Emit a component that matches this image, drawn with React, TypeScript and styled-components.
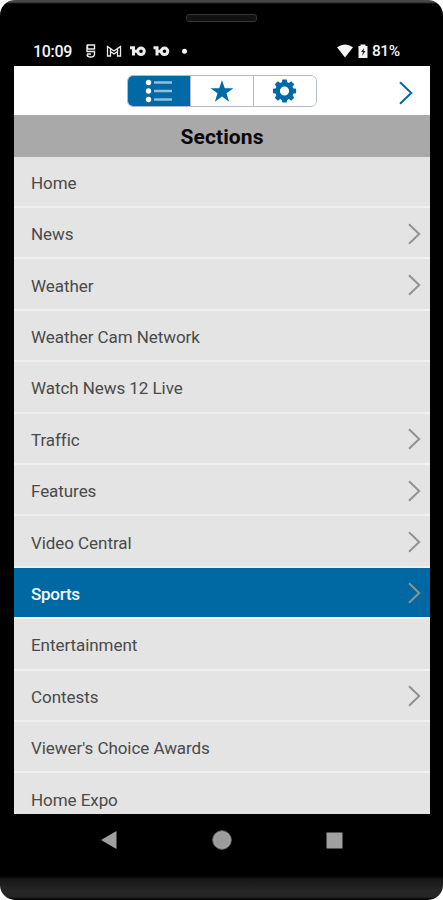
import React from "react";
import styled, { createGlobalStyle } from "styled-components";

const GlobalStyle = createGlobalStyle`
  *, *::before, *::after { box-sizing: border-box; }
  html, body { margin: 0; padding: 0; background: #fff; }
  body { font-family: Roboto, "Liberation Sans", sans-serif; overflow: hidden; }
  svg { display: block; flex: none; }
`;

const Phone = styled.main`
  width: 443px;
  height: 900px;
  display: flex;
  flex-direction: column;
  background: linear-gradient(#484848 0 2px, #000 4px 876px, #161616 879px, #262626 890px 897px, #050505 899px);
  border-radius: 15px;
  overflow: hidden;
`;

const Bezel = styled.header`
  height: 36px;
  flex: none;
  display: flex;
  justify-content: center;
  padding-top: 14px;
`;

const Speaker = styled.div`
  width: 71px;
  height: 8px;
  border: 1.5px solid #343434;
  border-radius: 3px;
  background: #111;
`;

const StatusBar = styled.div`
  height: 30px;
  flex: none;
  display: flex;
  align-items: center;
  color: #f4f4f4;
  padding: 0 43px 0 33px;
`;

const Clock = styled.span`
  font: 500 16px/30px Roboto, sans-serif;
  width: 52px;
  padding-top: 1px;
  letter-spacing: -0.3px;
`;

const Spacer = styled.span`
  flex: 1;
`;

const Percent = styled.span`
  font: 500 15.5px/30px Roboto, sans-serif;
  width: 28px;
  margin-left: 3px;
  letter-spacing: -0.45px;
`;

const Screen = styled.section`
  width: 416px;
  height: 748px;
  flex: none;
  margin-left: 14px;
  background: #e4e4e4;
  overflow: hidden;
`;

const Toolbar = styled.nav`
  height: 49px;
  display: grid;
  grid-template-columns: 1fr 189px 1fr;
  align-items: center;
  background: #fff;
`;

const Segments = styled.div`
  grid-column: 2;
  height: 32px;
  margin-left: -1px;
  display: flex;
  border: 1px solid #b4b9d2;
  border-radius: 6px;
  overflow: hidden;
`;

const Segment = styled.button<{ $active?: boolean }>`
  flex: 1;
  padding: 0;
  border: 0;
  display: flex;
  align-items: center;
  justify-content: center;
  background: ${(p) => (p.$active ? "#0069a6" : "#fff")};
  & + & { border-left: 1px solid #b4b9d2; }
`;

const Next = styled.button`
  border: 0;
  padding: 4px 17px 0 0;
  background: none;
  justify-self: end;
`;

const Title = styled.h1`
  margin: 0;
  height: 41.5px;
  background: #a9a9a9;
  color: #080808;
  font: 700 21px/44px Roboto, sans-serif;
  letter-spacing: 0.12px;
  text-align: center;
`;

const List = styled.ul`
  list-style: none;
  margin: 0;
  padding: 0;
`;

const Row = styled.li<{ $selected?: boolean }>`
  height: 51.42px;
  display: flex;
  align-items: center;
  justify-content: space-between;
  padding: 2px 9px 0 17px;
  border-bottom: 2px solid #f0f0f0;
  background: ${(p) => (p.$selected ? "#0069a3" : "#e4e4e4")};
  color: ${(p) => (p.$selected ? "#f4f9ff" : "#4a4a4a")};
  font-size: 17px;
  font-weight: ${(p) => (p.$selected ? 500 : 400)};
  letter-spacing: ${(p) => (p.$selected ? "-0.25px" : "-0.06px")};
  line-height: 24px;
`;

const Label = styled.span`
  padding-top: 1px;
`;

const NavBar = styled.footer`
  height: 52px;
  flex: none;
  display: grid;
  grid-template-columns: 113px 113px 113px;
  justify-content: center;
  align-items: center;
  justify-items: center;
`;

const sections: { name: string; more?: boolean; selected?: boolean }[] = [
  { name: "Home" },
  { name: "News", more: true },
  { name: "Weather", more: true },
  { name: "Weather Cam Network" },
  { name: "Watch News 12 Live" },
  { name: "Traffic", more: true },
  { name: "Features", more: true },
  { name: "Video Central", more: true },
  { name: "Sports", more: true, selected: true },
  { name: "Entertainment" },
  { name: "Contests", more: true },
  { name: "Viewer's Choice Awards" },
  { name: "Home Expo" },
];

const RowChevron = () => (
  <svg width="14" height="22" viewBox="0 0 14 22" fill="none" stroke="#929292" strokeWidth="2">
    <path d="M2 1.2 12.2 11 2 20.8" />
  </svg>
);

const NotificationIcons = () => (
  <svg width="104" height="16" viewBox="0 0 104 16" fill="none" stroke="#ececec" strokeWidth="1.600">
    <path d="M2.500 2h7v4h-7zM2 2v6.500h7.500v2.500q0 3-3.700 3t-3.800-2.500M2 11h4" strokeWidth="1.400" />
    <g strokeWidth="1.300">
      <path d="M22.500 13V3.500L29 8l6.500-4.500V13h-3V8.500L29 11l-3.500-2.500V13z" />
      <path d="M25.500 8.500v-3M32.500 8.500v-3" />
    </g>
    <g strokeWidth="3">
      <path d="M45 4.800h3.500V12.500" />
      <circle cx="56" cy="8.300" r="3.300" />
      <path d="M49 8.300h4" />
      <path d="M68.500 4.800H72V12.500" />
      <circle cx="79.500" cy="8.300" r="3.300" />
      <path d="M72.500 8.300h4" />
    </g>
    <circle cx="99.500" cy="8.200" r="2.500" fill="#fff" stroke="none" />
  </svg>
);

const SystemIcons = () => (
  <svg width="32" height="16" viewBox="0 0 32 16" fill="#f4f4f4">
    <path d="M0 4.200Q8 -1 16 4.200L8 14.500Z" />
    <path d="M23.500 1.500h5v1.500h2v12h-9V3h2z" />
    <path d="m27 5-3 4h2l-1 4 3.500-5h-2z" fill="#222" />
  </svg>
);

const ListIcon = () => (
  <svg width="28" height="24" viewBox="0 0 28 24">
    {[3.5, 12, 20.5].map((y) => (
      <g key={y}>
        <circle cx="3.500" cy={y} r="2.700" fill="#fff" />
        <path d={`M9 ${y}h18`} stroke="#94bedc" strokeWidth="2.500" />
      </g>
    ))}
  </svg>
);

const StarIcon = () => (
  <svg width="26" height="24" viewBox="0 0 26 24">
    <path
      d="m13 1.200 2.800 8.100h8.600l-6.900 5 2.600 8.400-7.100-5.100-7.100 5.100 2.600-8.400-6.900-5h8.600z"
      fill="#0069a6"
    />
  </svg>
);

const GearIcon = () => (
  <svg width="24" height="24" viewBox="-11.5 -12 24 24">
    <circle r="6.900" fill="none" stroke="#0069a6" strokeWidth="4.600" />
    {[0, 45, 90, 135, 180, 225, 270, 315].map((angle) => (
      <path key={angle} d="M-2.700-8 -2.200-11.600H2.200L2.700-8Z" fill="#0069a6" transform={`rotate(${angle})`} />
    ))}
  </svg>
);

export default function App() {
  return (
    <>
      <GlobalStyle />
      <Phone>
        <Bezel>
          <Speaker />
        </Bezel>
        <StatusBar>
          <Clock>10:09</Clock>
          <NotificationIcons />
          <Spacer />
          <SystemIcons />
          <Percent>81%</Percent>
        </StatusBar>
        <Screen>
          <Toolbar>
            <Segments>
              <Segment $active aria-label="Sections"><ListIcon /></Segment>
              <Segment aria-label="Favorites"><StarIcon /></Segment>
              <Segment aria-label="Settings"><GearIcon /></Segment>
            </Segments>
            <Next aria-label="Next">
              <svg width="14" height="24" viewBox="0 0 14 24" fill="none" stroke="#0069a6" strokeWidth="2">
                <path d="M1 1.200 12.300 12 1 22.800" />
              </svg>
            </Next>
          </Toolbar>
          <Title>Sections</Title>
          <List>
            {sections.map((s) => (
              <Row key={s.name} $selected={s.selected}>
                <Label>{s.name}</Label>
                {s.more && <RowChevron />}
              </Row>
            ))}
          </List>
        </Screen>
        <NavBar>
          <svg width="16" height="18" viewBox="0 0 16 18">
            <path d="M0 9 15.500 0v18z" fill="#a0a0a0" />
          </svg>
          <svg width="20" height="20" viewBox="0 0 20 20">
            <circle cx="10" cy="10" r="9.300" fill="#9b9b9b" stroke="#686868" />
            <circle cx="10" cy="10" r="8" fill="none" stroke="#aaa" strokeWidth=".8" />
          </svg>
          <svg width="17" height="17" viewBox="0 0 17 17">
            <path d="M.5.5h16v16H.5z" fill="#a0a0a0" />
          </svg>
        </NavBar>
      </Phone>
    </>
  );
}
